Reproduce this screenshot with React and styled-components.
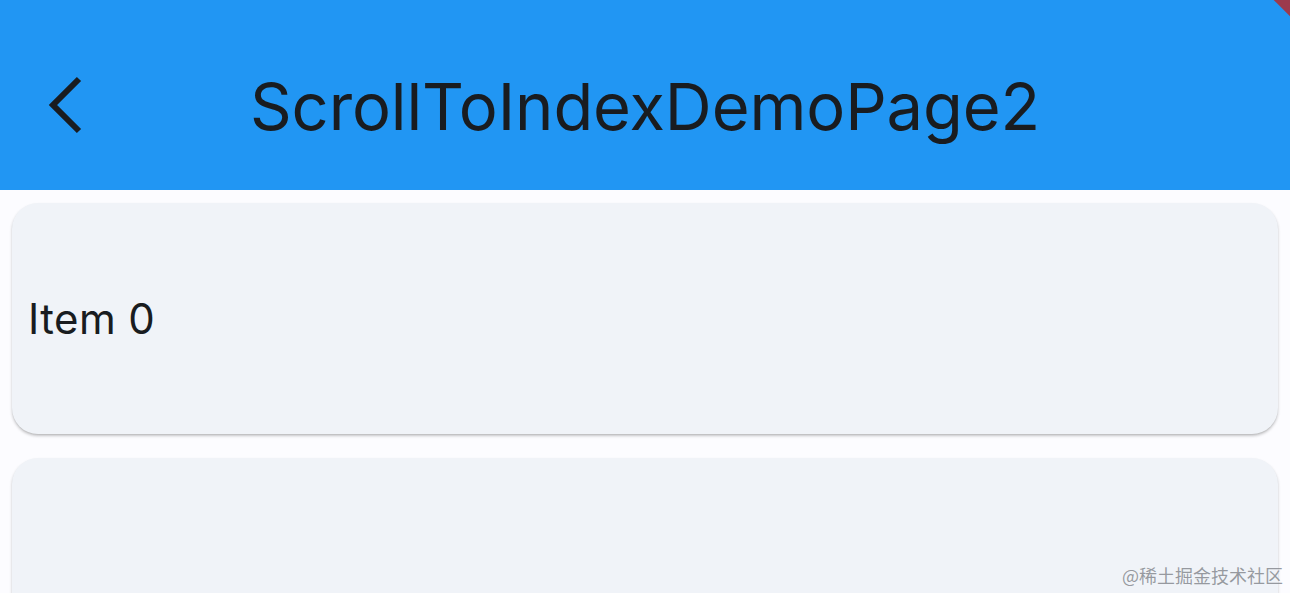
import React from "react";
import styled, { createGlobalStyle } from "styled-components";

const GlobalStyle = createGlobalStyle`
  html, body {
    margin: 0;
    padding: 0;
    background: #fcfcff;
    font-family: Inter, "Noto Sans", sans-serif;
    overflow: hidden;
  }
`;

const Page = styled.div`
  position: relative;
  width: 1290px;
  height: 593px;
  overflow: hidden;
  background: #fcfcff;
`;

const AppBar = styled.header`
  display: flex;
  align-items: center;
  height: 190px;
  padding-top: 22px;
  box-sizing: border-box;
  background: #2196f3;
  color: #191c20;
`;

const BackButton = styled.button`
  display: flex;
  align-items: center;
  justify-content: center;
  width: 64px;
  height: 64px;
  margin-left: 34px;
  padding: 0;
  border: none;
  background: transparent;
  color: #191c20;
`;

const Title = styled.h1`
  flex: 1;
  margin: 0 0 0 152px;
  font-family: Inter, "Noto Sans", sans-serif;
  font-weight: 400;
  font-size: 65px;
  letter-spacing: -0.1px;
  line-height: 1;
`;

const DebugCorner = styled.div`
  position: absolute;
  top: -26px;
  right: -26px;
  width: 40px;
  height: 40px;
  background: #9c3a4d;
  transform: rotate(45deg);
`;

const List = styled.div`
  display: flex;
  flex-direction: column;
  gap: 24px;
  padding: 13px 12px 0;
`;

const Card = styled.div`
  display: flex;
  align-items: center;
  height: 231px;
  padding-left: 16px;
  border-radius: 26px;
  background: #f0f3f8;
  box-shadow: 0 2px 3px rgba(0, 0, 0, 0.22), 0 1px 1px rgba(0, 0, 0, 0.06);
`;

const ItemText = styled.span`
  font-family: Inter, "Noto Sans", sans-serif;
  font-size: 42px;
  letter-spacing: 0.4px;
  color: #191c20;
  margin-top: 0;
`;

const Watermark = styled.div`
  position: absolute;
  right: 7px;
  bottom: 5px;
  font-family: "Noto Sans CJK SC", sans-serif;
  font-size: 18px;
  color: rgba(120, 124, 130, 0.75);
`;

export default function App() {
  return (
    <Page>
      <GlobalStyle />
      <AppBar>
        <BackButton aria-label="back">
          <svg width="40" height="60" viewBox="0 0 40 60">
            <path d="M33 3 L7 29 L33 55" fill="none" stroke="currentColor" strokeWidth="6" />
          </svg>
        </BackButton>
        <Title>ScrollToIndexDemoPage2</Title>
      </AppBar>
      <DebugCorner />
      <List>
        <Card>
          <ItemText>Item 0</ItemText>
        </Card>
        <Card />
      </List>
      <Watermark>@稀土掘金技术社区</Watermark>
    </Page>
  );
}
